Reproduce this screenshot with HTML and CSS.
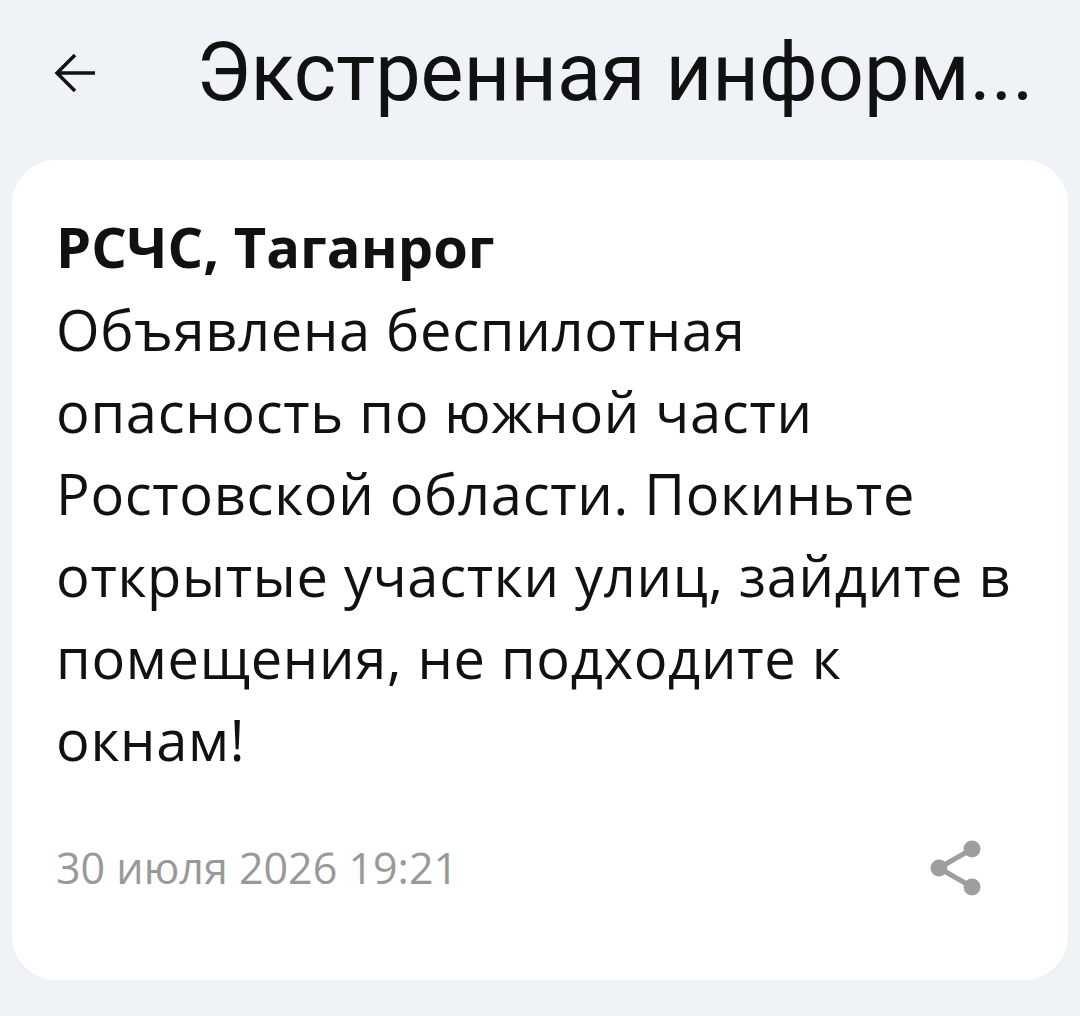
FILE: index.html
```html
<!DOCTYPE html>
<html>
<head>
  <title>Экстренная информация</title>
  <link rel="stylesheet" href="styles.css">
</head>
<body>
  <header class="top-bar">
    <button class="back-btn" aria-label="Назад">
      <svg width="44" height="44" viewBox="0 0 44 44">
        <path d="M42 22H4M22 4L4 22l18 18" fill="none" stroke="#111" stroke-width="3.5"/>
      </svg>
    </button>
    <h1 class="top-title">Экстренная информ...</h1>
  </header>

  <main class="alert-card">
    <h2 class="alert-source">РСЧС, Таганрог</h2>
    <p class="alert-text">Объявлена беспилотная опасность по южной части Ростовской области. Покиньте открытые участки улиц, зайдите в помещения, не подходите к окнам!</p>

    <div class="alert-footer">
      <span class="alert-date">30 июля 2026 19:21</span>
      <button class="share-btn" aria-label="Поделиться">
        <svg width="56" height="56" viewBox="0 0 56 56">
          <g stroke="#9e9e9e" stroke-width="5" fill="#9e9e9e">
            <line x1="44" y1="9" x2="11" y2="28"/>
            <line x1="11" y1="28" x2="44" y2="47"/>
            <circle cx="44" cy="9" r="6"/>
            <circle cx="11" cy="28" r="6"/>
            <circle cx="44" cy="47" r="6"/>
          </g>
        </svg>
      </button>
    </div>
  </main>
</body>
</html>
```

FILE: styles.css
```css
body {
  margin: 0;
  background-color: #eff2f7;
  font-family: 'Open Sans', 'Noto Sans', sans-serif;
  color: #111;
}

button {
  border: none;
  background: none;
  padding: 0;
  cursor: pointer;
}

.top-bar {
  box-sizing: border-box;
  height: 160px;
  display: flex;
  align-items: center;
  padding: 0 0 14px 53px;
}

.back-btn {
  display: flex;
  width: 44px;
  height: 44px;
}

.top-title {
  margin: 0 0 0 99px;
  font-family: Roboto, sans-serif;
  font-weight: 400;
  font-size: 81px;
  line-height: 80px;
  white-space: nowrap;
}

.alert-card {
  margin: 0 12px;
  padding: 44px 36px 82px 44px;
  background-color: #fff;
  border-radius: 44px;
}

.alert-source {
  margin: 0;
  font-size: 56px;
  font-weight: 700;
  line-height: 84px;
}

.alert-text {
  margin: 0;
  font-size: 56px;
  line-height: 82px;
  letter-spacing: 0.7px;
}

.alert-footer {
  display: flex;
  align-items: center;
  justify-content: space-between;
  margin-top: 58px;
  height: 60px;
}

.alert-date {
  font-size: 43px;
  line-height: 60px;
  color: #999;
}

.share-btn {
  display: flex;
  margin-right: 48px;
}
```
